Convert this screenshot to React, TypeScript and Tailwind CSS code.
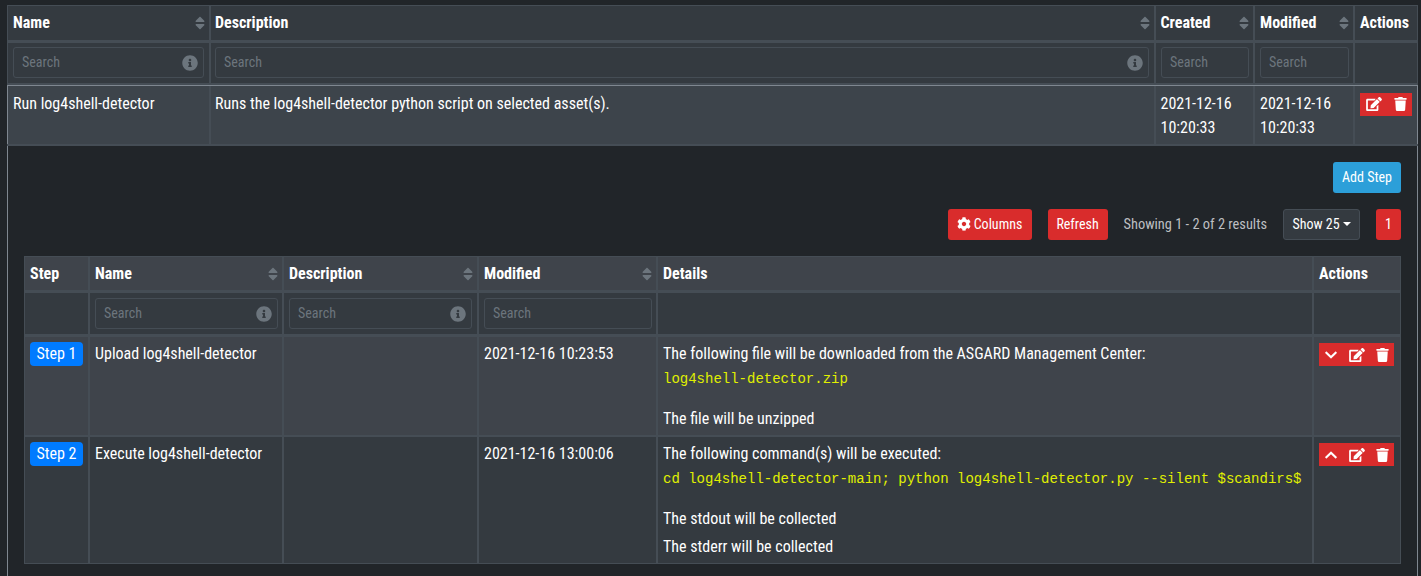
import React from "react";
import { FaSort, FaInfoCircle, FaEdit, FaTrash, FaCog, FaChevronDown, FaChevronUp } from "react-icons/fa";

const Head = ({ label, sort }: { label: string; sort?: boolean }) => (
  <div className="flex items-center justify-between bg-inherit pl-[5px] pr-px font-bold leading-6">
    <span>{label}</span>
    {sort && <FaSort className="size-4 text-[#6c757d]" />}
  </div>
);

const Search = ({ info }: { info?: boolean }) => (
  <div className="flex h-[31px] items-center justify-between rounded-[3px] border border-[#454d55] pl-2 pr-[5px] text-sm text-[#6c757d]">
    <span className="pb-0.5">Search</span>
    {info && <FaInfoCircle className="size-4" />}
  </div>
);

const Actions = ({ toggle }: { toggle?: "up" | "down" }) => (
  <div className={`mt-px flex h-[23px] w-max items-center bg-[#d92c2c] pl-1.5 pr-[5px] text-white ${toggle ? "" : "pb-px"}`}>
    {toggle === "down" && <FaChevronDown className="mr-3 h-3.5 w-3" />}
    {toggle === "up" && <FaChevronUp className="mr-3 h-3.5 w-3" />}
    <FaEdit className="h-3.5 w-4" />
    <FaTrash className={toggle ? "ml-[11px] h-3.5 w-[13px]" : "ml-3 h-3.5 w-[13px]"} />
  </div>
);

const Badge = ({ children }: { children: React.ReactNode }) => (
  <span className="block h-6 w-[53px] rounded bg-[#007bff] text-center leading-6">{children}</span>
);

export default function App() {
  return (
    <div className="h-[576px] w-[1421px] overflow-hidden bg-[#212529] pl-[7px] pt-[5px] font-['Roboto_Condensed',Roboto,sans-serif] text-base leading-6 text-white [font-stretch:75%]">
      <div className="w-[1411px]">
        <div className="bg-[#454d55] px-px pt-px">
          <div className="grid h-[34px] grid-cols-[201px_943px_97px_98px_62px] gap-x-0.5 *:bg-[#343a40] [&>*:nth-child(2)]:pl-1 [&>*:nth-child(3)]:pl-[4.5px]">
            <Head label="Name" sort />
            <Head label="Description" sort />
            <Head label="Created" sort />
            <Head label="Modified" sort />
            <Head label="Actions" />
          </div>
          <div className="mt-[3px] grid h-10 grid-cols-[201px_943px_97px_98px_62px] gap-x-0.5 *:bg-[#343a40] *:pl-[5px] *:pr-1 *:pt-1 [&>*:nth-child(1)]:pr-[5px] [&>*:nth-child(2)]:pl-1 [&>*:nth-child(2)]:pr-[5px]">
            <div><Search info /></div>
            <div><Search info /></div>
            <div><Search /></div>
            <div><Search /></div>
            <div />
          </div>
        </div>
        <div className="border-b-2 border-[#454d55] bg-[#454d55] pt-0.5">
          <div className="grid h-[59px] grid-cols-[201px_943px_97px_98px_62px] gap-x-0.5 border-x border-t border-[#7f8790] *:bg-[#3d444b] *:px-[5px] *:pt-1.5 [&>*:nth-child(2)]:pl-1 [&>*:nth-child(3)]:pl-[4.5px]">
            <div>Run log4shell-detector</div>
            <div>Runs the log4shell-detector python script on selected asset(s).</div>
            <div>2021-12-16 10:20:33</div>
            <div>2021-12-16 10:20:33</div>
            <div><Actions /></div>
          </div>
        </div>
        <div className="h-[440px] border-x border-[#7f8790] px-4 pt-4">
          <div className="flex justify-end">
            <button className="h-[31px] w-[68px] rounded-[3px] bg-[#2c9fd9] pb-0.5 text-sm">Add Step</button>
          </div>
          <div className="mt-4 flex items-center justify-end gap-4 text-sm">
            <button className="flex h-[31px] w-[84px] items-center justify-center gap-[3px] rounded-[3px] bg-[#d92c2c]">
              <FaCog className="mb-px size-3.5" />
              <span className="pb-0.5">Columns</span>
            </button>
            <button className="h-[31px] w-[60px] rounded-[3px] bg-[#d92c2c] pb-0.5">Refresh</button>
            <span className="text-[14.4px] leading-5 text-[#bdbfc1]">Showing 1 - 2 of 2 results</span>
            <button className="flex h-[31px] w-[77px] items-center justify-center gap-[3px] rounded-[3px] border border-[#454d55] bg-[#343a40]">
              <span className="pb-0.5">Show 25</span>
              <span className="mb-0.5 border-x-4 border-t-4 border-x-transparent border-t-white" />
            </button>
            <button className="h-[31px] w-[25px] rounded-[3px] bg-[#d92c2c] pb-0.5">1</button>
          </div>
          <div className="mt-4 w-[1377px] border border-[#454d55] bg-[#454d55]">
            <div className="grid h-[33px] grid-cols-[63px_192px_193px_177px_654px_86px] gap-x-0.5 *:bg-[#3f444b]">
              <Head label="Step" />
              <Head label="Name" sort />
              <Head label="Description" sort />
              <Head label="Modified" sort />
              <Head label="Details" />
              <Head label="Actions" />
            </div>
            <div className="mt-[3px] grid h-[41px] grid-cols-[63px_192px_193px_177px_654px_86px] gap-x-0.5 *:bg-[#343a40] *:pl-[5px] *:pr-1 *:pt-[5px] [&>*:nth-child(3)]:pr-[5px]">
              <div />
              <div><Search info /></div>
              <div><Search info /></div>
              <div><Search /></div>
              <div />
              <div />
            </div>
            <div className="mt-[3px] grid h-[98px] grid-cols-[63px_192px_193px_177px_654px_86px] gap-x-0.5 *:bg-[#3f444b] *:px-[5px] *:pt-[5px]">
              <div><Badge>Step 1</Badge></div>
              <div>Upload log4shell-detector</div>
              <div />
              <div>2021-12-16 10:23:53</div>
              <div>
                <p>The following file will be downloaded from the ASGARD Management Center:</p>
                <pre className="mb-4 pt-0.5 font-['Liberation_Mono',monospace] text-sm leading-[23px] text-[#e0f000]">log4shell-detector.zip</pre>
                <p>The file will be unzipped</p>
              </div>
              <div><Actions toggle="down" /></div>
            </div>
            <div className="mt-0.5 grid h-[126px] grid-cols-[63px_192px_193px_177px_654px_86px] gap-x-0.5 *:bg-[#343a40] *:px-[5px] *:pt-[5px]">
              <div><Badge>Step 2</Badge></div>
              <div>Execute log4shell-detector</div>
              <div />
              <div>2021-12-16 13:00:06</div>
              <div>
                <p>The following command(s) will be executed:</p>
                <pre className="mb-4 pt-0.5 font-['Liberation_Mono',monospace] text-sm leading-[23px] text-[#e0f000]">cd log4shell-detector-main; python log4shell-detector.py --silent $scandirs$</pre>
                <p>The stdout will be collected</p>
                <p className="mt-1">The stderr will be collected</p>
              </div>
              <div><Actions toggle="up" /></div>
            </div>
          </div>
        </div>
      </div>
    </div>
  );
}
